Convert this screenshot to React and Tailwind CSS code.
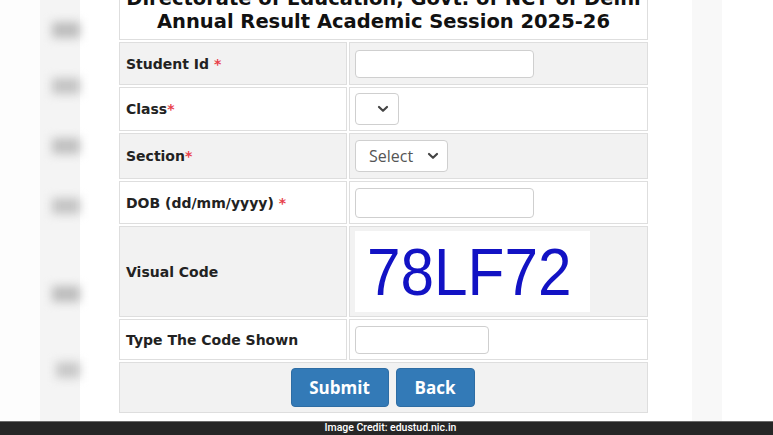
import React from "react";

const Req = () => <span className="text-[#e8414b]">*</span>;

const Chevron = () => (
  <svg width="12" height="8" viewBox="0 0 12 8" className="text-[#444]">
    <path d="M2 2 L6 5.8 L10 2" fill="none" stroke="currentColor" strokeWidth="2.2" strokeLinecap="round" strokeLinejoin="round" />
  </svg>
);

const Row = ({ label, gray, h, children }) => (
  <tr className={gray ? "bg-[#f2f2f2]" : "bg-white"}>
    <td className={`border border-[#dedede] pl-[6px] align-middle ${h}`}>
      <span className="text-[14px] font-bold text-[#222]">{label}</span>
    </td>
    <td className={`border border-[#dedede] pl-[5px] align-middle ${h}`}>{children}</td>
  </tr>
);

const TextInput = ({ w }) => (
  <div className={`h-[28px] ${w} rounded-[4px] border border-[#cfcfcf] bg-white`} />
);

export default function App() {
  return (
    <div className="flex h-[435px] w-[773px] flex-col overflow-hidden bg-white font-['DejaVu_Sans',sans-serif]">
      <div className="flex min-h-0 flex-1">
        {/* blurred background left */}
        <div className="flex w-[80px] shrink-0">
          <div className="w-[40px] bg-[#fdfdfd]" />
          <div className="flex w-[40px] flex-col items-end bg-[#f4f4f4] pt-[22px]">
            <div className="h-[16px] w-[28px] bg-[#bdbdbd] blur-[5px]" />
            <div className="mt-[40px] h-[16px] w-[28px] bg-[#c4c4c4] blur-[5px]" />
            <div className="mt-[44px] h-[16px] w-[28px] bg-[#c0c0c0] blur-[5px]" />
            <div className="mt-[44px] h-[16px] w-[28px] bg-[#c4c4c4] blur-[5px]" />
            <div className="mt-[72px] h-[16px] w-[28px] bg-[#bdbdbd] blur-[5px]" />
            <div className="mt-[60px] h-[16px] w-[24px] bg-[#c8c8c8] blur-[5px]" />
          </div>
        </div>

        {/* main panel */}
        <div className="w-[610px] shrink-0 bg-white pl-[37px]">
          <table className="-mt-[21px] w-[533px] table-fixed border-separate border-spacing-[2px]">
            <colgroup>
              <col className="w-[228px]" />
              <col />
            </colgroup>
            <tbody>
              <tr>
                <td colSpan={2} className="border border-[#dedede] pb-[6px] pt-[5px] text-center text-[19.5px] font-bold leading-[23px] text-[#111]">
                  <div className="whitespace-nowrap">Directorate of Education, Govt. of NCT of Delhi</div>
                  <div className="whitespace-nowrap">Annual Result Academic Session 2025-26</div>
                </td>
              </tr>
              <Row gray h="h-[43px]" label={<>Student Id <Req /></>}>
                <TextInput w="w-[179px]" />
              </Row>
              <Row h="h-[44px]" label={<>Class<Req /></>}>
                <div className="flex h-[32px] w-[44px] items-center justify-end rounded-[4px] border border-[#cfcfcf] bg-white pr-[9px]">
                  <Chevron />
                </div>
              </Row>
              <Row gray h="h-[46px]" label={<>Section<Req /></>}>
                <div className="flex h-[32px] w-[93px] items-center justify-between rounded-[4px] border border-[#cfcfcf] bg-white pl-[13px] pr-[8px] font-['Open_Sans',sans-serif] text-[16px] text-[#555]">
                  <span>Select</span>
                  <Chevron />
                </div>
              </Row>
              <Row h="h-[43px]" label={<>DOB (dd/mm/yyyy) <Req /></>}>
                <div className="h-[30px] w-[179px] rounded-[4px] border border-[#cfcfcf] bg-white" />
              </Row>
              <Row gray h="h-[91px]" label="Visual Code">
                <div className="flex h-[81px] w-[235px] items-center overflow-hidden bg-white pl-[12px]">
                  <span className="origin-left scale-x-[0.9] font-['Liberation_Sans',sans-serif] text-[67px] leading-none text-[#1212c4]">
                    78LF72
                  </span>
                </div>
              </Row>
              <Row h="h-[41px]" label="Type The Code Shown">
                <TextInput w="w-[134px]" />
              </Row>
              <tr className="bg-[#f2f2f2]">
                <td colSpan={2} className="h-[51px] border border-[#dedede] align-middle">
                  <div className="flex justify-center gap-[7px] pr-[2px] font-['Open_Sans',sans-serif] text-[17px] font-bold text-white">
                    <button className="h-[39px] w-[98px] rounded-[4px] border border-[#2e6da4] bg-[#337ab7]">Submit</button>
                    <button className="h-[39px] w-[79px] rounded-[4px] border border-[#2e6da4] bg-[#337ab7]">Back</button>
                  </div>
                </td>
              </tr>
            </tbody>
          </table>
        </div>

        {/* blurred background right */}
        <div className="flex flex-1">
          <div className="w-[2px] bg-white" />
          <div className="w-[30px] bg-[#f8f8f8]" />
          <div className="flex-1 bg-white" />
        </div>
      </div>

      {/* credit bar */}
      <div className="flex h-[14px] shrink-0 items-center justify-center border-t border-[#6a6a6a] bg-[#262626] pl-[8px] font-['Roboto',sans-serif] text-[10.5px] font-medium leading-none text-white">
        Image Credit: edustud.nic.in
      </div>
    </div>
  );
}
